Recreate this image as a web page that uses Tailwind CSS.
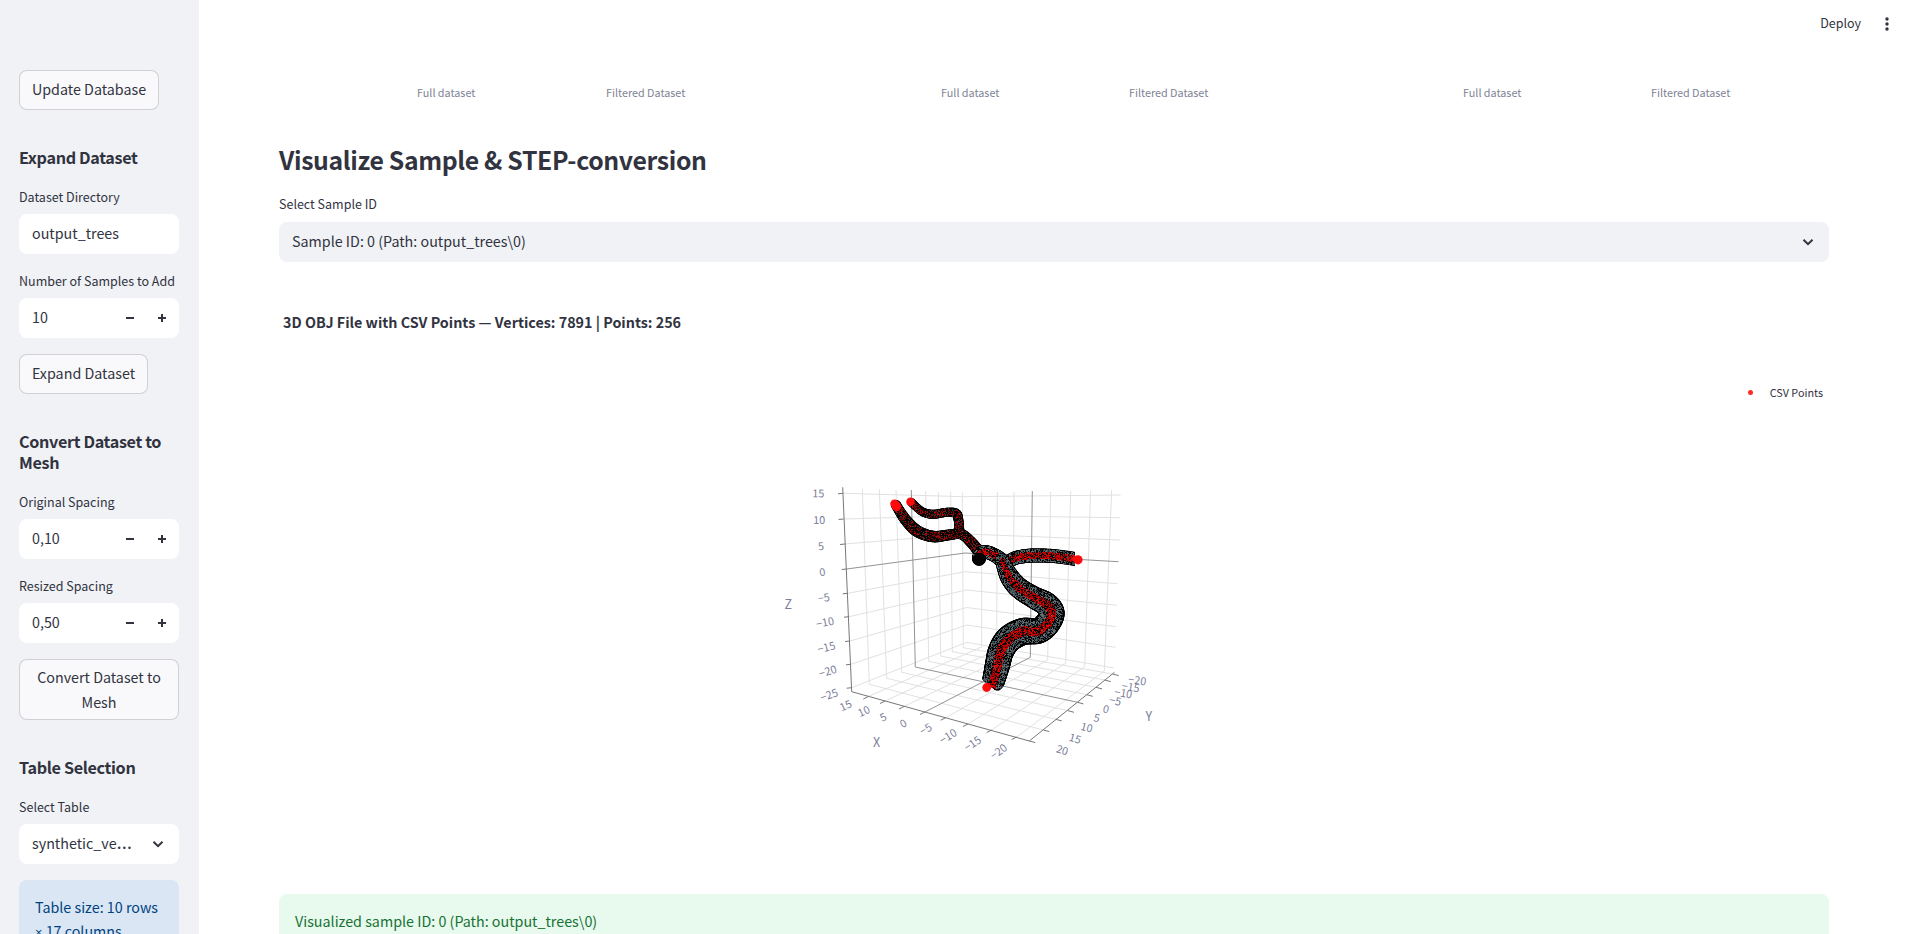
<!DOCTYPE html>
<html lang="en">
<head>
<meta charset="utf-8">
<title>Dataset Viewer</title>
<script src="https://cdn.jsdelivr.net/npm/@tailwindcss/browser@4"></script>
</head>
<body class="h-[934px] overflow-hidden bg-white font-['Noto_Sans_CJK_SC','Noto_Sans',sans-serif] text-[14.3px] text-[#31333f]">
<div class="flex h-full">
  <aside class="flex w-[199px] shrink-0 flex-col items-start gap-4 overflow-hidden bg-[#f0f2f6] pt-[70px] pr-5 pl-[19px] whitespace-nowrap">
    <button class="h-10 w-[140px] shrink-0 rounded-lg border border-[#31333f]/20 bg-[#f9f9fb] pb-0.5">Update Database</button>
    <h3 class="h-11 shrink-0 pt-[21px] text-[16.2px] leading-[21px] font-semibold tracking-[-0.35px]">Expand Dataset</h3>
    <div class="w-full shrink-0">
      <div class="h-7 text-[12.5px] leading-[21px]">Dataset Directory</div>
      <div class="flex h-10 items-center rounded-lg bg-white px-[13px] pb-0.5">output_trees</div>
    </div>
    <div class="w-full shrink-0">
      <div class="h-7 text-[12.5px] leading-[21px]">Number of Samples to Add</div>
      <div class="flex h-10 items-center rounded-lg bg-white pl-[13px]">
        <span class="flex-1 pb-0.5">10</span>
        <svg class="h-8 w-8" viewBox="0 0 32 32" fill="#31333f"><path d="M11 15h8v2h-8z"/></svg>
        <svg class="h-8 w-8" viewBox="0 0 32 32" fill="#31333f"><path d="M11 15h3v-3h2v3h3v2h-3v3h-2v-3h-3z"/></svg>
      </div>
    </div>
    <button class="h-10 w-[129px] shrink-0 rounded-lg border border-[#31333f]/20 bg-[#f9f9fb] pb-0.5">Expand Dataset</button>
    <h3 class="h-[65px] shrink-0 pt-[21px] text-[16.2px] leading-[21px] font-semibold tracking-[-0.35px]">Convert Dataset to<br>Mesh</h3>
    <div class="w-full shrink-0">
      <div class="h-7 text-[12.5px] leading-[22px]">Original Spacing</div>
      <div class="flex h-10 items-center rounded-lg bg-white pl-[13px]">
        <span class="flex-1 pb-0.5">0,10</span>
        <svg class="h-8 w-8" viewBox="0 0 32 32" fill="#31333f"><path d="M11 15h8v2h-8z"/></svg>
        <svg class="h-8 w-8" viewBox="0 0 32 32" fill="#31333f"><path d="M11 15h3v-3h2v3h3v2h-3v3h-2v-3h-3z"/></svg>
      </div>
    </div>
    <div class="w-full shrink-0">
      <div class="h-7 text-[12.5px] leading-[22px]">Resized Spacing</div>
      <div class="flex h-10 items-center rounded-lg bg-white pl-[13px]">
        <span class="flex-1 pb-0.5">0,50</span>
        <svg class="h-8 w-8" viewBox="0 0 32 32" fill="#31333f"><path d="M11 15h8v2h-8z"/></svg>
        <svg class="h-8 w-8" viewBox="0 0 32 32" fill="#31333f"><path d="M11 15h3v-3h2v3h3v2h-3v3h-2v-3h-3z"/></svg>
      </div>
    </div>
    <button class="h-[61px] w-full shrink-0 rounded-lg border border-[#31333f]/20 bg-[#f9f9fb] pb-0.5 leading-[25px]">Convert Dataset to<br>Mesh</button>
    <h3 class="h-11 shrink-0 pt-[21px] text-[16.2px] leading-[21px] font-semibold tracking-[-0.35px]">Table Selection</h3>
    <div class="w-full shrink-0">
      <div class="h-7 text-[12.5px] leading-[22px]">Select Table</div>
      <div class="flex h-10 items-center justify-between rounded-lg bg-white pr-[15px] pl-[13px]">
        <span class="pb-0.5">synthetic_ve<span class="font-['Open_Sans',sans-serif] text-[20px] leading-none">…</span></span>
        <svg class="h-3 w-3" viewBox="0 0 12 12" fill="none" stroke="#31333f" stroke-width="2"><path d="M1.5 3.8 6 8.2l4.500-4.400"/></svg>
      </div>
    </div>
    <div class="h-24 w-full shrink-0 rounded-lg bg-[#dae6f4] px-4 pt-[15px] leading-6 text-[#004280]">Table size: 10 rows<br><span class="font-['Open_Sans',sans-serif] text-[13px] leading-none">×</span> 17 columns</div>
  </aside>

  <main class="flex min-w-0 flex-1 flex-col">
    <header class="flex h-12 shrink-0 items-center justify-end gap-[18px] pr-[23px] text-[12.5px]">
      <span class="pb-0.5">Deploy</span>
      <svg class="h-4 w-4" viewBox="0 0 16 16" fill="#31333f"><circle cx="8" cy="3" r="1.700"/><circle cx="8" cy="8" r="1.700"/><circle cx="8" cy="13" r="1.700"/></svg>
    </header>
    <div class="flex flex-1 flex-col pr-[89px] pl-20">
      <div class="grid h-[90px] shrink-0 grid-cols-[524px_522px_1fr] pt-[34px] pl-[138px] text-[10.8px] leading-5 whitespace-nowrap text-[#808495]">
        <div class="flex gap-[131px]"><span class="w-[58px]">Full dataset</span><span>Filtered Dataset</span></div>
        <div class="flex gap-[130px]"><span class="w-[58px]">Full dataset</span><span>Filtered Dataset</span></div>
        <div class="flex gap-[130px]"><span class="w-[58px]">Full dataset</span><span>Filtered Dataset</span></div>
      </div>
      <h2 class="h-[56px] shrink-0 pt-[3px] text-[24.800px] leading-[37px] font-semibold tracking-[-0.36px]">Visualize Sample &amp; STEP-conversion</h2>
      <div class="h-7 shrink-0 text-[12.5px] leading-5">Select Sample ID</div>
      <div class="flex h-10 shrink-0 items-center justify-between rounded-lg bg-[#f0f2f6] pr-[15px] pl-[13px]">
        <span class="pb-0.5">Sample ID: 0 (Path: output_trees\0)</span>
        <svg class="h-3 w-3" viewBox="0 0 12 12" fill="none" stroke="#31333f" stroke-width="2"><path d="M1.5 3.800 6 8.200l4.500-4.400"/></svg>
      </div>
      <section class="flex h-[632px] shrink-0 flex-col">
        <h4 class="h-[119px] shrink-0 pt-[49px] pl-1 text-[14.32px] leading-[22px] font-bold">3D OBJ File with CSV Points — Vertices: 7891 | Points: 256</h4>
        <div class="flex h-[22px] shrink-0 items-center justify-end gap-[17px] pr-1.5 text-[10.800px]"><span class="h-[5px] w-[5px] rounded-full bg-[#ff2b2b]"></span><span>CSV Points</span></div>
        <div class="mt-[57px] grid">
          <svg id="axes" class="col-start-1 row-start-1 ml-[491px] h-[320px] w-[400px]" viewBox="770 460 400 320" fill="none"></svg>
          <canvas id="mesh" class="col-start-1 row-start-1 ml-[491px] h-[320px] w-[400px]" width="400" height="320"></canvas>
        </div>
      </section>
      <div class="h-14 shrink-0 rounded-lg bg-[#e8f9ee] px-4 leading-[54px] text-[#177233]">Visualized sample ID: 0 (Path: output_trees\0)</div>
    </div>
  </main>
</div>
<script>
// Axes, walls and floor of the 3D scene
const NS = 'http://www.w3.org/2000/svg', axes = document.getElementById('axes');
function line(pts, color, w) {
  const p = document.createElementNS(NS, 'polyline');
  p.setAttribute('points', pts.map(q => q.join(',')).join(' '));
  p.setAttribute('stroke', color); p.setAttribute('stroke-width', w || 1);
  axes.appendChild(p);
}
const DARK = '#939393', LIGHT = '#e1e1e1';
const zRows = [
  [[843,493.3],[964,496.7],[1120.7,495]], [[843.6,519],[965,515.5],[1120,517.7]],
  [[845,544],[965,534],[1120,540]], [[846.7,569],[965,553],[1118.500,561.700]],
  [[847.7,593.3],[965,571.7],[1117.500,583.700]], [[849,616.700],[966.300,590],[1116.700,605.300]],
  [[850,641],[966.700,607.500],[1115.700,626.700]], [[851,664.300],[966.700,625],[1115.500,647.300]],
  [[851.700,687.700],[966.700,642.300],[1114.300,668]]];
const left = [[862.300,489,869.300,684.300],[879.300,489.300,886.700,678.300],[896,490,901.700,672.300],[911.300,490,915.300,667],
  [925.700,491,928.700,661.300],[938.300,491.700,940.700,656],[950.700,491.700,952.300,651.700],[962.300,492.300,963.300,647.700]];
const yTicks = [[1043.300,730],[1055.700,719.300],[1068,710.700],[1077.500,702.300],[1086.700,694.700],[1096,687.300],[1104.700,680],[1112.700,674]];
const right = [[981.700,492.300,981.700,647],[997.300,492,996.700,650],[1014,492,1013.300,653.300],[1032.300,491,1030.300,657.300],
  [1050.700,491.700,1047.700,660],[1070.700,491,1065.700,663.300],[1090.700,490.700,1084.700,666.700],[1111.700,490,1104.300,671]];
const xTicks = [[868.300,696.500],[885,701],[904,706.500],[925,712],[945.700,717.700],[968,724],[991.700,730],[1016.700,737]];
for (const pass of [0, 1]) {
  const c = pass ? DARK : LIGHT;
  zRows.forEach((r, i) => { if ((i === 3) == pass) line(r, c); });
  left.forEach((r, i) => { if ((i === 3) == pass) line([[r[0], r[1]], [r[2], r[3]], yTicks[i]], c); });
  right.forEach((r, i) => { if ((i === 3) == pass) line([[r[0], r[1]], [r[2], r[3]], xTicks[i]], c); });
}
line([[842.700,487.300],[851.700,691.700],[1029.300,741],[1114.500,672.300]], '#777');
zRows.forEach(r => line([[r[0][0] - 5, r[0][1] + .500], r[0]], '#777'));
xTicks.forEach(t => line([[t[0] - 5, t[1] + 2.500], t], '#777'));
[[1029.300,741], ...yTicks].forEach(t => line([t, [t[0] + 6, t[1] + 1.600]], '#777'));
function label(s, x, y, rot, size) {
  const t = document.createElementNS(NS, 'text');
  t.textContent = s; t.setAttribute('fill', '#7c809a'); t.setAttribute('font-size', size || 10.800);
  t.setAttribute('text-anchor', 'middle');
  t.setAttribute('transform', `translate(${x} ${y}) rotate(${rot})`);
  t.setAttribute('y', (size || 10.800) * .37);
  axes.appendChild(t);
}
[['15',818.300,493.300,1],['10',819.300,520,-1],['5',821,546,-4],['0',822.300,572,-6],['−5',823.700,597.700,-8],['−10',825,622.300,-11],
 ['−15',826.300,647.300,-14],['−20',827.700,671.300,-17],['−25',829,695,-20],
 ['15',845.700,705.300,-24],['10',863.700,711,-25],['5',883,717,-27],['0',903.300,723.300,-29],['−5',925.700,729,-30],['−10',948,736.300,-32],
 ['−15',972.500,743.500,-34],['−20',998.500,751.500,-37],
 ['20',1062.300,750,17],['15',1075,738.300,16],['10',1086.700,727.300,14],['5',1096.700,717.700,13],['0',1106,709,12],['−5',1115.300,700.800,11],
 ['−10',1123.300,693,10],['−15',1130.700,687,9],['−20',1137.300,680.300,8]].forEach(a => label(...a));
label('Z', 788.300, 604, 0, 12.500); label('X', 876.700, 742, 0, 12.500); label('Y', 1148.700, 716, 0, 12.500);

// Vessel mesh: each branch is a list of [x, y, radius]
const branches = [
  [[896,505,5],[905,519,5.600],[917,531,6],[933,536.500,5.800],[948,535,5.400],[961,534,5.300],[971,542,5.500],[980,553,6]],
  [[911,502,4],[922,511.500,4.300],[933,514.300,4.500],[947,512.300,4.500],[956,513.500,4.800],[958.500,520,4.800],[959.500,533,5]],
  [[979,559,6.800],[980,554,6.500],[986,552,6.800],[996,556,7],[1006,564,7.500]],
  [[1006,564,6.500],[1014,558.500,6.800],[1026,556,7],[1040,555.500,7],[1058,556.500,7],[1084,560.500,7]],
  [[1002,560,7],[1009,576,9.500],[1019,588,10.500],[1034,597.500,11],[1046,604,12],[1052,613,12.500],[1047,624,12.700],[1038,631,12.700],[1023,631.500,13.500],[1009,639,13.500],[1001,651,13],[997.500,665,12.500],[994,679,11.500],[990,694,11]]];
const ctx = document.getElementById('mesh').getContext('2d');
ctx.translate(-770, -460);
let seed = 7;
const rnd = () => (seed = (seed * 16807) % 2147483647) / 2147483647;
const cr = (a, b, c, d, t) => .5 * (2*b + (c-a)*t + (2*a-5*b+4*c-d)*t*t + (3*b-a-3*c+d)*t*t*t);
const dot = (x, y, r, c) => { ctx.fillStyle = c; ctx.beginPath(); ctx.arc(x, y, r, 0, 7); ctx.fill(); };
// Open tube ends are cut flat
const clips = { 3: [[880,480],[1076,480],[1074.500,580],[880,580]], 4: [[880,480],[1160,480],[1160,691],[1000,691],[995,690],[982,679],[880,620]] };
branches.forEach((b, k) => {
  ctx.save();
  if (clips[k]) { ctx.beginPath(); clips[k].forEach(p => ctx.lineTo(p[0], p[1])); ctx.clip(); }
  const s = [];
  for (let i = 0; i < b.length - 1; i++) {
    const p = b[Math.max(0, i-1)], q = b[i], r = b[i+1], u = b[Math.min(b.length-1, i+2)];
    for (let t = 0; t < 1; t += .05) s.push([0,1,2].map(j => cr(p[j], q[j], r[j], u[j], t)));
  }
  s.filter(p => k !== 4 || p[1] < 681).forEach(p => dot(p[0], p[1], p[2], '#050505'));
  for (let y = 490; y < 689; y++) for (let x = 885; x < 1100; x++) {
    let m = 9;
    for (const p of s) { const d = Math.hypot(x + .5 - p[0], y + .5 - p[1]) / p[2]; if (d < m) m = d; }
    if (m > .9 || Math.hypot(x - 979, y - 559) < 7) continue;
    const thin = k < 2, v = rnd();
    if (m < (thin ? .8 : k === 4 ? .36 : .52) && v < (thin ? .38 : .6)) ctx.fillStyle = `rgb(${(thin ? 80 : 130) + rnd() * 125 | 0},0,0)`;
    else if (!thin && v < .62) { const g = 35 + rnd() * 75 | 0; ctx.fillStyle = `rgb(${g},${g + 14},${g + 19})`; }
    else if (thin && v > .9) ctx.fillStyle = '#2c3a3e';
    else continue;
    ctx.fillRect(x, y, 1, 1);
  }
  ctx.restore();
});
[[894.500,503.700,4.300],[896.500,506.500,4.700],[910.500,501.800,4.300],[1078,559.800,4.600],[1074.500,559,2.500],[986.700,687.500,4.400]].forEach(p => dot(p[0], p[1], p[2], '#ff0a0a'));
</script>
</body>
</html>
